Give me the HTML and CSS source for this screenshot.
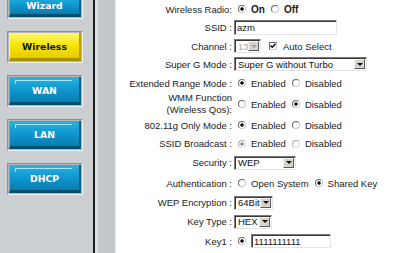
FILE: index.html
```html
<!DOCTYPE html>
<html>
<head>
    <title>Wireless Setup</title>
    <link rel="stylesheet" href="styles.css">
</head>
<body>
    <div class="page">
        <nav class="sidebar">
            <div class="nav-item first"><a class="nav-btn">Wizard</a></div>
            <div class="nav-item"><a class="nav-btn active">Wireless</a></div>
            <div class="nav-item"><a class="nav-btn">WAN</a></div>
            <div class="nav-item"><a class="nav-btn">LAN</a></div>
            <div class="nav-item"><a class="nav-btn">DHCP</a></div>
        </nav>
        <div class="gutter"></div>

        <main class="content">
            <div class="form">
                <label>Wireless Radio:</label>
                <div class="val">
                    <span class="opt"><input type="radio" name="radio" class="radio" checked><b>On</b></span>
                    <span class="opt"><input type="radio" name="radio" class="radio"><b>Off</b></span>
                </div>

                <label>SSID :</label>
                <div class="val"><input type="text" class="text ssid" value="azm"></div>

                <label>Channel :</label>
                <div class="val">
                    <span class="select channel disabled"><span class="select-value">13</span><span class="select-arrow"></span></span>
                    <span class="check">
                        <svg width="6" height="6" viewBox="0 0 6 6"><polyline points="0.5,2.5 2.2,4.3 5.5,0.8" fill="none" stroke="#000" stroke-width="1.3"/></svg>
                    </span>
                    <span class="check-label">Auto Select</span>
                </div>

                <label>Super G Mode :</label>
                <div class="val">
                    <span class="select superg"><span class="select-value">Super G without Turbo</span><span class="select-arrow"></span></span>
                </div>

                <label>Extended Range Mode :</label>
                <div class="val">
                    <span class="opt"><input type="radio" name="xr" class="radio" checked>Enabled</span>
                    <span class="opt"><input type="radio" name="xr" class="radio">Disabled</span>
                </div>

                <label class="two-line">WMM Function<br>(Wireless Qos):</label>
                <div class="val">
                    <span class="opt"><input type="radio" name="wmm" class="radio">Enabled</span>
                    <span class="opt"><input type="radio" name="wmm" class="radio" checked>Disabled</span>
                </div>

                <label>802.11g Only Mode :</label>
                <div class="val">
                    <span class="opt"><input type="radio" name="gonly" class="radio" checked>Enabled</span>
                    <span class="opt"><input type="radio" name="gonly" class="radio">Disabled</span>
                </div>

                <label>SSID Broadcast :</label>
                <div class="val">
                    <span class="opt"><input type="radio" name="bcast" class="radio" checked disabled>Enabled</span>
                    <span class="opt"><input type="radio" name="bcast" class="radio" disabled>Disabled</span>
                </div>

                <label>Security :</label>
                <div class="val">
                    <span class="select security"><span class="select-value">WEP</span><span class="select-arrow"></span></span>
                </div>

                <label>Authentication :</label>
                <div class="val">
                    <span class="opt"><input type="radio" name="auth" class="radio">Open System</span>
                    <span class="opt"><input type="radio" name="auth" class="radio" checked>Shared Key</span>
                </div>

                <label>WEP Encryption :</label>
                <div class="val">
                    <span class="select wep"><span class="select-value">64Bit</span><span class="select-arrow"></span></span>
                </div>

                <label>Key Type :</label>
                <div class="val">
                    <span class="select keytype"><span class="select-value">HEX</span><span class="select-arrow"></span></span>
                </div>

                <label>Key1 :</label>
                <div class="val">
                    <input type="radio" name="key" class="radio" checked>
                    <input type="text" class="text key" value="1111111111">
                </div>
            </div>
        </main>
    </div>
</body>
</html>
```

FILE: styles.css
```css
body {
    margin: 0;
    font-family: 'Liberation Sans', Arial, sans-serif;
    font-size: 9.5px;
    color: #222;
    background: #fff;
}

.page {
    display: flex;
    height: 253px;
    overflow: hidden;
}

/* left menu */
.sidebar {
    width: 95px;
    flex-shrink: 0;
    background: #cbcfd2;
    border-right: 2px solid #1e1e1e;
    display: flex;
    flex-direction: column;
    gap: 12px;
    padding-left: 7px;
    box-sizing: border-box;
    margin-top: -5px;
    height: 258px;
}

.gutter {
    width: 17px;
    flex-shrink: 0;
    background: #c5c8cb;
    border-left: 3px solid #dcdedf;
    border-right: 1px solid #e8e9ea;
}

.nav-item {
    width: 76px;
    height: 32px;
    flex-shrink: 0;
    box-sizing: border-box;
    padding: 1px;
    background: #b3b7ba;
    border: 1px solid;
    border-color: #8c9093 #eef0f1 #eef0f1 #8c9093;
}

.nav-item.first {
    height: 24px;
    border-top: none;
}

.nav-btn {
    position: relative;
    display: flex;
    align-items: center;
    justify-content: center;
    height: 100%;
    box-sizing: border-box;
    font-family: 'DejaVu Sans', Verdana, sans-serif;
    font-size: 9.3px;
    font-weight: bold;
    color: #fff;
    background: linear-gradient(#27b4e2, #0e94cc 55%, #0a7cb0);
    border-bottom: 3px solid #08506f;
    border-right: 2px solid #0a5d84;
    border-left: 1px solid #3dbde6;
    padding-top: 2px;
}

.nav-btn::before {
    content: '';
    position: absolute;
    top: 3px;
    left: 5px;
    right: 7px;
    height: 3px;
    border-top: 1px solid #a8e6fb;
    border-left: 1px solid #a8e6fb;
}

.first .nav-btn {
    padding-top: 0;
}

.first .nav-btn::before {
    display: none;
}

.nav-btn.active {
    color: #141414;
    background: linear-gradient(#fff66e, #f6e300 55%, #e6cb00);
    border-bottom-color: #a69200;
    border-right-color: #b8a200;
    border-left-color: #fff38a;
}

.nav-btn.active::before {
    display: none;
}

/* form area */
.content {
    flex: 1;
    background: #fff;
}

.form {
    display: grid;
    grid-template-columns: 116px auto;
    grid-template-rows: 18px 19px 18px 18px 20px 22px 20px 17px 21px 20px 19px 19px 20px;
    column-gap: 2px;
    align-items: center;
}

.form label {
    text-align: right;
    white-space: nowrap;
}

.form label.two-line {
    line-height: 12px;
}

.val {
    display: flex;
    align-items: center;
    white-space: nowrap;
    color: #1a1a1a;
}

.val b {
    font-size: 10px;
}

.opt {
    display: flex;
    align-items: center;
}

.opt + .opt {
    margin-left: 2px;
}

.radio {
    appearance: none;
    -webkit-appearance: none;
    width: 8px;
    height: 8px;
    margin: 0 5px 0 4px;
    border: 1px solid;
    border-color: #6a6a6a #c8c8c8 #c8c8c8 #6a6a6a;
    border-radius: 50%;
    background: #fff;
    box-sizing: border-box;
}

.radio:checked {
    background: radial-gradient(circle, #000 0 1.4px, #fff 1.9px);
}

.radio:disabled {
    border-color: #a8a8a8 #dcdcdc #dcdcdc #a8a8a8;
}

.radio:disabled:checked {
    background: radial-gradient(circle, #8a8a8a 0 1.4px, #fff 1.9px);
}

.text {
    box-sizing: border-box;
    height: 15px;
    padding: 0 2px;
    font-family: 'Liberation Sans', Arial, sans-serif;
    font-size: 9.5px;
    color: #111;
    border: 1px solid;
    border-color: #7a7a7a #e4e4e4 #e4e4e4 #7a7a7a;
    box-shadow: inset 1px 1px 0 #3a3a3a;
    outline: none;
}

.ssid {
    width: 103px;
}

.key {
    width: 80px;
    height: 14px;
}

/* fake drop-downs */
.select {
    display: inline-flex;
    align-items: center;
    box-sizing: border-box;
    height: 14px;
    padding: 1px 1px 1px 2px;
    background: #fff;
    border: 1px solid;
    border-color: #7a7a7a #e4e4e4 #e4e4e4 #7a7a7a;
    box-shadow: inset 1px 1px 0 #3a3a3a;
    color: #111;
}

.select-value {
    flex: 1;
    padding-left: 1px;
    overflow: hidden;
}

.select-arrow {
    display: flex;
    align-items: center;
    justify-content: center;
    width: 11px;
    height: 10px;
    box-sizing: border-box;
    background: #d6d3cc;
    border: 1px solid;
    border-color: #f4f4f4 #5a5a5a #5a5a5a #f4f4f4;
}

.select-arrow::after {
    content: '';
    border-left: 3px solid transparent;
    border-right: 3px solid transparent;
    border-top: 3px solid #111;
}

.select.disabled .select-value {
    color: #a4a4a4;
}

.select.disabled .select-arrow::after {
    border-top-color: #a0a0a0;
}

.channel {
    width: 27px;
}

.superg {
    width: 133px;
}

.security {
    width: 62px;
}

.wep {
    width: 39px;
}

.keytype {
    width: 38px;
}

.check {
    display: flex;
    align-items: center;
    justify-content: center;
    width: 8px;
    height: 8px;
    margin-left: 8px;
    box-sizing: border-box;
    border: 1px solid;
    border-color: #6a6a6a #d0d0d0 #d0d0d0 #6a6a6a;
    background: #fff;
}

.check-label {
    margin-left: 6px;
}
```
